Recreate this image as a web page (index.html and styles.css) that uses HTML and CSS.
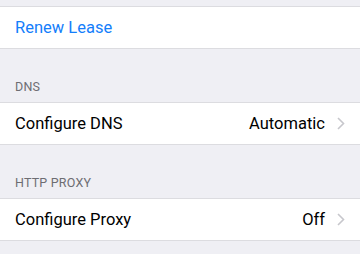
FILE: index.html
```html
<!DOCTYPE html>
<html lang="en">
<head>
    <meta charset="UTF-8">
    <meta name="viewport" content="width=device-width, initial-scale=1.0">
    <title>Wi-Fi Settings</title>
    <link rel="stylesheet" href="styles.css">
</head>
<body>
    <div class="top-gap"></div>

    <!-- Lease -->
    <div class="group">
        <div class="row">
            <span class="label action">Renew Lease</span>
        </div>
    </div>

    <!-- DNS -->
    <div class="section-header">DNS</div>
    <div class="group">
        <div class="row">
            <span class="label">Configure DNS</span>
            <span class="value">Automatic</span>
            <svg class="chevron" width="8" height="13" viewBox="0 0 8 13">
                <path d="M1 1l5.5 5.5L1 12" fill="none" stroke="#c7c7cc" stroke-width="1.6"/>
            </svg>
        </div>
    </div>

    <!-- HTTP proxy -->
    <div class="section-header">HTTP PROXY</div>
    <div class="group">
        <div class="row">
            <span class="label">Configure Proxy</span>
            <span class="value">Off</span>
            <svg class="chevron" width="8" height="13" viewBox="0 0 8 13">
                <path d="M1 1l5.5 5.5L1 12" fill="none" stroke="#c7c7cc" stroke-width="1.6"/>
            </svg>
        </div>
    </div>
</body>
</html>
```

FILE: styles.css
```css
body {
    margin: 0;
    background: #efeff4;
    font-family: Roboto, "Liberation Sans", sans-serif;
    color: #000;
}
.top-gap {
    height: 6px;
}
.group {
    background: #fff;
    border-top: 1px solid #dcdce0;
    border-bottom: 1px solid #dcdce0;
}
.row {
    display: flex;
    align-items: center;
    height: 41px;
    padding: 0 15px;
}
.label {
    flex: 1;
    font-size: 16.5px;
}
.action {
    color: #147efb;
}
.value {
    font-size: 16.5px;
    margin-right: 12px;
}
.chevron {
    display: block;
}
.section-header {
    height: 53px;
    box-sizing: border-box;
    padding: 0 15px 8px;
    display: flex;
    align-items: flex-end;
    font-size: 12.5px;
    color: #6d6d72;
    letter-spacing: 0.2px;
}
```
